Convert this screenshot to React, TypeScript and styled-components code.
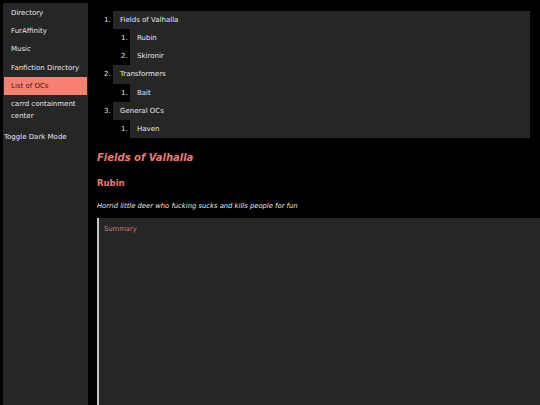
import React from 'react'
import styled, {createGlobalStyle} from 'styled-components';

const GlobalStyle = createGlobalStyle`
  html, body {
    margin: 0;
    padding: 0;
    background: #000000;
    font-family: "DejaVu Sans", "Noto Sans", sans-serif;
    color: #e6e6e6;
    overflow: hidden;
  }
`;

const Page = styled("div")`
  display: flex;
  align-items: flex-start;
  height: 405px;
  padding-top: 3px;
  box-sizing: border-box;
  overflow: hidden;
`;

const Sidebar = styled("nav")`
  width: 85px;
  margin-left: 3px;
  align-self: stretch;
  background: #262626;
  padding-top: 1px;
  font-size: 7px;
  flex-shrink: 0;
`;

const SideLink = styled("div")<{active?: boolean}>`
  padding: 3.1px 6px 3.1px 7px;
  line-height: 12px;
  margin: 0 1px;
  background: ${p => p.active ? "#fa8072" : "transparent"};
  color: ${p => p.active ? "#3a1a16" : "#e6e6e6"};
`;

const Toggle = styled("div")`
  padding: 3.1px 0 3.1px 1px;
  line-height: 12px;
  margin-top: 3px;
`;

const Content = styled("main")`
  flex: 1;
  padding-left: 9px;
  min-width: 0;
`;

const Toc = styled("ol")<{nested?: boolean}>`
  margin: ${p => p.nested ? "0" : "8px 10px 0 0"};
  padding-left: ${p => p.nested ? "17px" : "16px"};
  font-size: 7px;
  color: #e6e6e6;
`;

const TocLink = styled("div")`
  background: #262626;
  padding: 0 7px;
  line-height: 18.15px;
`;

const Title = styled("h2")`
  margin: 14px 0 0;
  font-size: 10px;
  font-style: italic;
  font-weight: 800;
  color: #ec7b6e;
`;

const Name = styled("h3")`
  margin: 15px 0 0;
  font-size: 8.5px;
  font-weight: 700;
  color: #ec7b6e;
`;

const Blurb = styled("p")`
  margin: 14px 0 0;
  font-size: 6.8px;
  font-style: italic;
  color: #e6e6e6;
`;

const Details = styled("div")`
  margin-top: 8px;
  height: 200px;
  background: #262626;
  border-left: 2px solid #c8c8c8;
  padding: 7px 5px;
`;

const Summary = styled("div")`
  font-size: 6.8px;
  color: #c77b72;
`;

const sideItems = ["Directory", "FurAffinity", "Music", "Fanfiction Directory", "List of OCs", "carrd containment center"];

const groups = [
    {name: "Fields of Valhalla", ocs: ["Rubin", "Skironir"]},
    {name: "Transformers", ocs: ["Bait"]},
    {name: "General OCs", ocs: ["Haven"]},
];

function App() {
    return (
        <Page>
            <GlobalStyle/>
            <Sidebar>
                {sideItems.map(item => (
                    <SideLink key={item} active={item === "List of OCs"}>{item}</SideLink>
                ))}
                <Toggle>Toggle Dark Mode</Toggle>
            </Sidebar>
            <Content>
                <Toc>
                    {groups.map(g => (
                        <li key={g.name}>
                            <TocLink>{g.name}</TocLink>
                            <Toc nested>
                                {g.ocs.map(oc => (
                                    <li key={oc}><TocLink>{oc}</TocLink></li>
                                ))}
                            </Toc>
                        </li>
                    ))}
                </Toc>
                <Title>Fields of Valhalla</Title>
                <Name>Rubin</Name>
                <Blurb>Horrid little deer who fucking sucks and kills people for fun</Blurb>
                <Details>
                    <Summary>Summary</Summary>
                </Details>
            </Content>
        </Page>
    )
}

export default App
